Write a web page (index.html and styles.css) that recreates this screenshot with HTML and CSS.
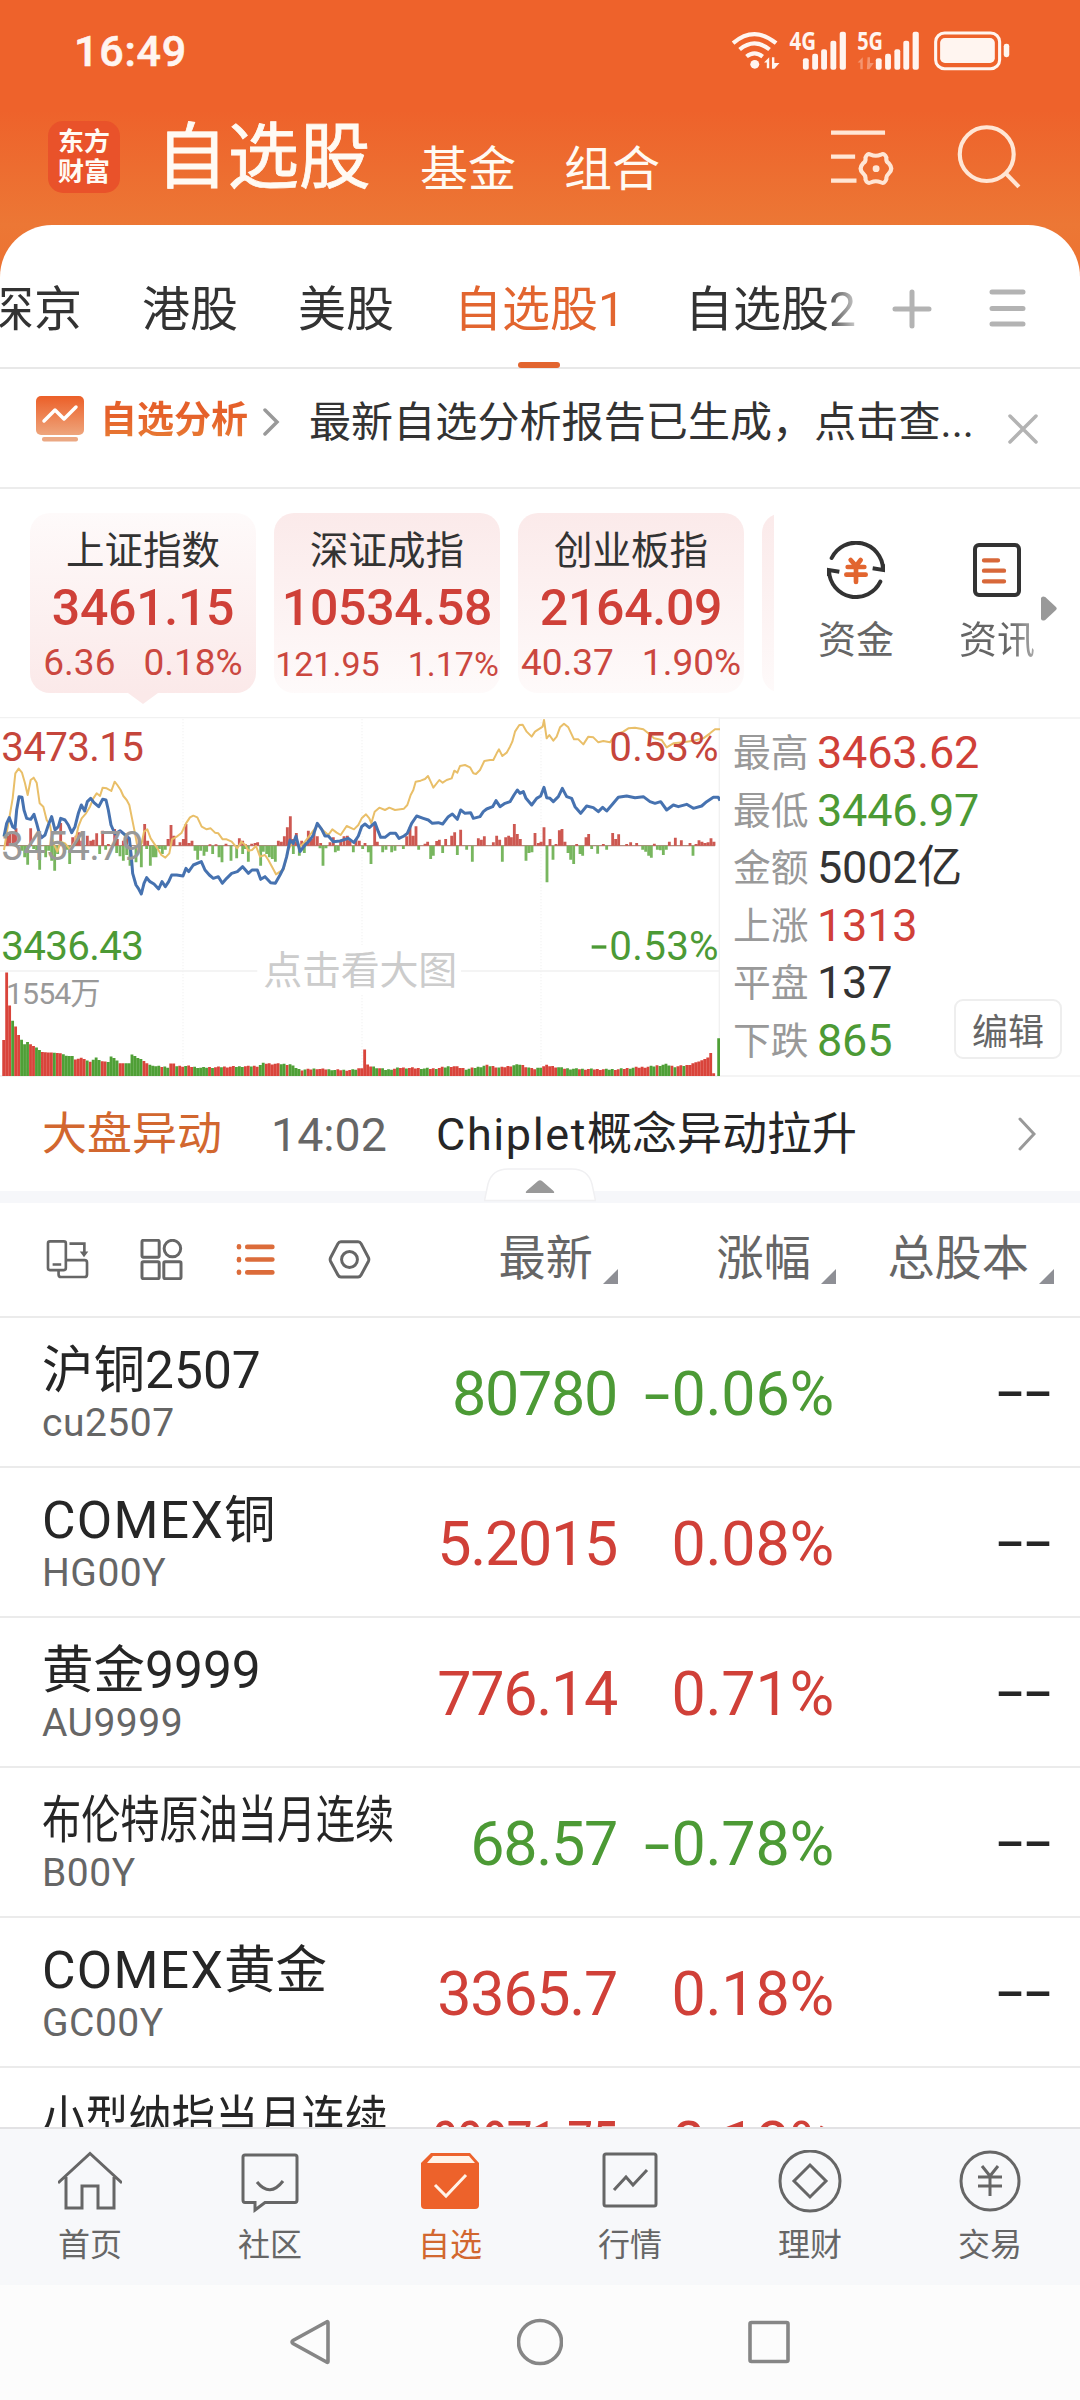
FILE: index.html
```html
<!DOCTYPE html>
<html lang="zh-CN">
<head>
<meta charset="utf-8">
<title>自选股</title>
<link rel="stylesheet" href="styles.css">
</head>
<body>
<div class="phone">
  <header class="top">
    <div class="status">
      <span class="clock">16:49</span>
      <svg class="status-icons" viewBox="550 90 820 122" preserveAspectRatio="none" fill="#fff5f0">
        <g fill="none" stroke="#fff5f0" stroke-width="12">
          <path d="M559 129Q621 76 684 129"/><path d="M578 148Q621 112 665 148"/><path d="M598 169Q621 150 645 169"/>
          <rect x="1148" y="99" width="186" height="106" rx="26" stroke-width="9"/>
        </g>
        <circle cx="622" cy="192" r="13"/>
        <path d="M649 187l15-16v33h-7v-17zM672 171h7v17h15l-15 17h-7z"/>
        <path opacity=".35" d="M921 187l15-16v36h-7v-20zM950 171h7v17h11l-13 19h-7z"/>
        <rect x="762" y="174" width="17" height="34" rx="6"/><rect x="789" y="161" width="17" height="47" rx="6"/><rect x="815" y="147" width="17" height="61" rx="6"/><rect x="842" y="122" width="17" height="86" rx="6"/><rect x="869" y="95" width="18" height="113" rx="6"/>
        <rect x="974" y="174" width="17" height="34" rx="6"/><rect x="1001" y="161" width="17" height="47" rx="6"/><rect x="1028" y="147" width="17" height="61" rx="6"/><rect x="1054" y="122" width="17" height="86" rx="6"/><rect x="1081" y="95" width="18" height="113" rx="6"/>
        <rect x="1161" y="114" width="159" height="74" rx="14"/><rect x="1346" y="131" width="16" height="40" rx="7"/>
        <text class="net" x="723" y="151" textLength="77" lengthAdjust="spacingAndGlyphs">4G</text>
        <text class="net" x="920" y="151" textLength="75" lengthAdjust="spacingAndGlyphs">5G</text>
      </svg>
    </div>
    <div class="titlebar">
      <div class="logo"><span>东方</span><span>财富</span></div>
      <h1 class="title">自选股</h1>
      <span class="section">基金</span>
      <span class="section">组合</span>
      <svg class="ic-manage" viewBox="842 385 186 174" preserveAspectRatio="none" fill="none" stroke="#ffe6d5" stroke-width="13">
        <path d="M845 399h157M845 471h70M845 543h74"/>
        <path stroke-linejoin="round" stroke-width="12" d="M960 465Q975 472 990 465Q1001 459 1006 474Q1004 486 1013 491Q1027 507 1013 521Q1004 530 1006 538Q1001 554 989 548Q975 541 962 548Q950 554 945 539Q947 529 938 521Q924 507 938 491Q947 486 945 474Q950 459 960 465Z"/>
        <circle cx="976" cy="507" r="10" fill="#ffe6d5" stroke="none"/>
      </svg>
      <svg class="ic-search" viewBox="1212 372 188 194" preserveAspectRatio="none" fill="none" stroke="#ffe6d5" stroke-width="12"><ellipse cx="1298" cy="462" rx="78" ry="80"/><path d="M1351 517l40 43"/></svg>
    </div>
  </header>

  <main class="sheet">
    <nav class="tabs">
      <div class="tablist">
        <span>深京</span><span>港股</span><span>美股</span><span class="on">自选股1</span><span>自选股2</span>
      </div>
      <svg class="tab-tools" viewBox="0 0 140 48" stroke="#b3b3b3" stroke-width="5" stroke-linecap="round"><path d="M3 24h34M20 7v34M100 7h31M100 23.500h31M100 39h31"/></svg>
    </nav>

    <section class="banner">
      <svg class="ic-report" viewBox="0 0 48 46"><defs><linearGradient id="rg" x2="0" y2="1"><stop stop-color="#ec5f28"/><stop offset="1" stop-color="#eea57c"/></linearGradient></defs><rect width="48" height="39" rx="5" fill="url(#rg)"/><path d="M8 25l11-11 9 9 12-12" fill="none" stroke="#fff" stroke-width="3.500" stroke-linecap="round" stroke-linejoin="round"/><rect x="6" y="41" width="36" height="4.500" rx="2" fill="#eba883"/></svg>
      <b class="report-label">自选分析</b>
      <svg class="ic-more" viewBox="0 0 18 28" fill="none" stroke="#999" stroke-width="3.500" stroke-linecap="round"><path d="M3 2l12 12L3 26"/></svg>
      <span class="report-text">最新自选分析报告已生成，点击查...</span>
      <svg class="ic-close" viewBox="0 0 30 30" stroke="#b3b3b3" stroke-width="3.500" stroke-linecap="round"><path d="M2 2l26 26M28 2L2 28"/></svg>
    </section>

    <section class="indices">
      <div class="cards">
        <div class="card active"><span class="iname">上证指数</span><b>3461.15</b><p><span>6.36</span><span>0.18%</span></p></div>
        <div class="card"><span class="iname">深证成指</span><b>10534.58</b><p class="tight"><span>121.95</span><span>1.17%</span></p></div>
        <div class="card"><span class="iname">创业板指</span><b>2164.09</b><p><span>40.37</span><span>1.90%</span></p></div>
        <div class="card"></div>
      </div>
      <div class="shortcut">
        <svg class="ic-fund" viewBox="0 0 174 174" fill="none" stroke="#333" stroke-width="12"><path stroke-linecap="round" d="M14 51A81 81 0 0 1 168 84"/><path stroke-linecap="round" d="M160 122A81 81 0 0 1 6 90"/><path d="M137 82l31 5V70M37 92L6 87v18"/><path stroke="#e2652f" stroke-linecap="round" stroke-width="14" d="M71 57l16 18M101 57L87 75M62 78h50M58 101h58M87 75v48"/></svg>
        <span>资金</span>
      </div>
      <div class="shortcut faded">
        <svg class="ic-news" viewBox="0 0 144 162" fill="none" stroke-width="12" stroke="#333"><rect x="6" y="6" width="132" height="150" rx="12"/><path stroke="#d8683a" stroke-width="13" stroke-linecap="round" d="M33 52h42M33 83h60M33 115h60"/></svg>
        <span>资讯</span>
      </div>
      <svg class="ic-next" viewBox="0 0 15 24" preserveAspectRatio="none"><path d="M0 2Q1-.5 4 1L14 10.500Q15.500 12 14 13.500L4 23Q1 24.500 0 22Z" fill="#999"/></svg>
    </section>

    <section class="market">
      <svg class="chart" viewBox="0 21 2160 1080">
        <g stroke="#f1f1f1" stroke-width="4" fill="none">
          <path d="M0 23H2160M2158 23V1098M0 783H772M1383 783H2160M0 1098H2160"/>
          <path stroke-width="3" stroke-dasharray="4 5" d="M549 27V1098M1086 27V705M1086 855V1098M1623 27V1098"/>
        </g>
        <path id="volUp" stroke="#d9443b" stroke-width="8.500"/>
        <path id="volDown" stroke="#4f9f36" stroke-width="8.500"/>
        <path d="M0 407H2145" stroke="#b08a7c" stroke-width="4"/>
        <path id="flowUp" stroke="#cd5851" stroke-width="8.500"/>
        <path id="flowDown" stroke="#78b65f" stroke-width="8.500"/>
        <polyline fill="none" stroke="#e9bf69" stroke-width="6" stroke-linejoin="round" points="12,420 20,370 38,265 46,190 56,176 66,188 75,220 83,255 92,210 101,203 110,218 119,280 130,290 140,330 150,345 160,400 172,425 182,395 195,400 210,418 225,395 235,350 245,325 258,310 270,290 280,265 290,250 300,258 308,233 320,235 334,243 344,215 352,225 362,240 370,258 380,270 388,285 396,325 405,370 414,420 425,400 432,365 442,358 452,385 462,400 472,415 484,435 496,443 508,430 516,388 530,380 545,368 558,340 570,322 580,317 592,322 605,350 620,358 632,355 645,368 655,370 668,388 680,388 695,395 712,415 724,395 736,405 745,422 756,420 768,408 780,440 795,435 805,450 816,470 828,493 840,485 850,480 865,420 875,400 888,390 900,410 915,395 930,375 945,355 955,345 968,360 985,375 997,358 1010,368 1022,375 1040,348 1062,358 1075,345 1085,325 1098,313 1108,325 1114,340 1124,305 1138,293 1155,300 1168,293 1185,300 1212,296 1222,285 1232,255 1240,240 1247,215 1262,212 1275,207 1284,198 1292,215 1300,233 1318,210 1328,218 1340,210 1355,205 1363,182 1372,188 1380,168 1395,165 1410,172 1420,190 1428,192 1440,180 1453,153 1470,150 1480,150 1490,130 1497,118 1507,138 1520,128 1530,110 1537,95 1545,65 1558,45 1568,44 1580,65 1595,80 1605,65 1620,55 1628,50 1632,30 1640,85 1648,75 1660,92 1670,80 1680,52 1692,41 1705,52 1722,88 1735,88 1750,103 1765,80 1780,82 1795,97 1810,93 1830,97 1845,75 1870,65 1885,55 1905,53 1930,58 1945,70 1962,85 1985,90 2000,112 2020,100 2050,97 2080,92 2110,85 2130,70 2145,58 2160,58"/>
        <polyline fill="none" stroke="#4672b0" stroke-width="9" stroke-linejoin="round" points="12,380 20,340 28,323 38,350 45,355 50,300 57,260 66,262 72,300 80,325 92,328 102,313 110,340 118,370 125,383 135,375 145,345 155,320 165,360 175,350 182,325 195,330 205,345 215,368 225,350 235,310 244,285 254,303 262,275 272,265 282,278 296,290 308,268 318,270 325,300 333,345 345,372 360,362 372,372 388,385 394,440 398,490 408,525 415,535 424,552 432,520 440,503 450,515 462,522 476,537 486,515 496,530 506,515 515,495 530,495 549,498 558,475 566,485 580,465 604,455 615,480 628,495 640,505 655,500 667,520 680,505 695,490 712,485 728,470 745,490 756,480 772,480 782,508 795,500 812,518 826,520 840,495 850,475 860,440 870,390 880,400 888,378 900,425 915,405 930,390 940,375 952,340 965,358 975,378 985,378 1000,395 1020,393 1045,385 1062,398 1075,378 1085,350 1095,342 1108,353 1125,338 1135,365 1142,382 1155,382 1170,370 1187,370 1197,385 1212,378 1222,370 1235,340 1250,318 1270,325 1285,330 1297,340 1315,338 1328,342 1345,320 1357,312 1372,328 1382,300 1395,310 1412,308 1420,325 1440,320 1450,305 1460,297 1478,290 1488,272 1500,290 1515,280 1530,275 1542,255 1552,240 1560,250 1570,245 1578,265 1595,285 1610,265 1622,258 1632,232 1640,263 1650,265 1660,275 1675,260 1687,235 1700,260 1715,265 1725,290 1742,310 1760,288 1780,293 1795,305 1808,292 1820,303 1838,282 1855,262 1880,258 1905,263 1930,260 1950,275 1965,280 1982,275 2000,300 2020,285 2035,290 2060,283 2080,295 2105,288 2120,275 2140,262 2155,262 2160,272"/>
        <g class="axis">
          <text class="up" x="4" y="153" textLength="428">3473.15</text>
          <text class="flat" x="4" y="450" textLength="428">3454.79</text>
          <text class="down" x="4" y="750" textLength="428">3436.43</text>
          <text class="up" x="1828" y="153" textLength="328">0.53%</text>
          <text class="down" x="1828" y="750" textLength="328">0.53%</text>
          <path d="M1775 711h44" stroke="#4c9a35" stroke-width="10"/>
        </g>
        <text class="vol" x="18" y="881" textLength="284">1554万</text>
        <text class="hint" x="790" y="822" textLength="582">点击看大图</text>
      </svg>
      <div class="stats">
        <dl>
          <dt>最高</dt><dd class="up">3463.62</dd>
          <dt>最低</dt><dd class="down">3446.97</dd>
          <dt>金额</dt><dd>5002亿</dd>
          <dt>上涨</dt><dd class="up">1313</dd>
          <dt>平盘</dt><dd>137</dd>
          <dt>下跌</dt><dd class="down">865</dd>
        </dl>
        <button class="edit">编辑</button>
      </div>
    </section>

    <section class="news">
      <span class="tag">大盘异动</span><time>14:02</time><span class="headline"><i>Chiplet</i>概念异动拉升</span>
      <svg class="ic-go" viewBox="0 0 18 34" fill="none" stroke="#999" stroke-width="3" stroke-linecap="round"><path d="M2 2l14 15L2 32"/></svg>
    </section>
    <div class="band">
      <svg class="handle" viewBox="0 0 112 34"><path d="M0.500 32.500L4 16Q8 1 24 1H88Q104 1 108 16L111.500 32.500Z" fill="#fff" stroke="#f0f0f2" stroke-width="1.500"/><path d="M42 25Q41 24 43 22.500L54 13Q56 11.500 58 13L69 22.500Q71 24 70 25Z" fill="#999"/></svg>
    </div>

    <section class="colhead">
      <div class="views">
        <svg viewBox="50 238 128 124" fill="none" stroke="#666" stroke-width="8"><rect x="55" y="245" width="54" height="87" rx="6"/><path d="M69 315h26M111 302h55q7 0 7 7v36q0 8-8 8H95q-8 0-8-8V335M120 252h45v28"/><path d="M151 276h26l-13 17z" fill="#666" stroke="none"/></svg>
        <svg viewBox="332 238 128 124" fill="none" stroke="#666" stroke-width="9"><rect x="337" y="242" width="52" height="51" rx="4"/><circle cx="429" cy="267" r="25"/><rect x="337" y="307" width="52" height="51" rx="4"/><rect x="403" y="307" width="52" height="51" rx="4"/></svg>
        <svg viewBox="614 238 128 124" fill="none" stroke="#dc6c3a" stroke-width="14" stroke-linecap="round"><path d="M653 262h76M653 300h76M653 339h76M628 260v3M628 299v3M628 337v3"/></svg>
        <svg viewBox="896 238 128 124" fill="none" stroke="#666" stroke-width="9"><path stroke-linejoin="round" d="M934 246h52q6 0 9 6l22 42q3 6 0 12l-22 41q-3 6-9 6h-52q-6 0-9-6l-22-41q-3-6 0-12l22-42q3-6 9-6z"/><circle cx="960" cy="300" r="24"/></svg>
      </div>
      <span class="col sort c1">最新</span><span class="col sort c2">涨幅</span><span class="col sort c3">总股本</span>
    </section>

    <section class="rows">
      <div class="row"><div class="who"><span>沪铜2507</span><small>cu2507</small></div><div class="num down">80780</div><div class="num down pct"><i class="dash">-</i>0.06%</div><div class="cap"><i class="dash">-</i><i class="dash">-</i></div></div>
      <div class="row"><div class="who"><span><i>COMEX</i>铜</span><small>HG00Y</small></div><div class="num up">5.2015</div><div class="num up pct">0.08%</div><div class="cap"><i class="dash">-</i><i class="dash">-</i></div></div>
      <div class="row"><div class="who"><span>黄金9999</span><small>AU9999</small></div><div class="num up">776.14</div><div class="num up pct">0.71%</div><div class="cap"><i class="dash">-</i><i class="dash">-</i></div></div>
      <div class="row"><div class="who"><span class="fit9">布伦特原油当月连续</span><small>B00Y</small></div><div class="num down">68.57</div><div class="num down pct"><i class="dash">-</i>0.78%</div><div class="cap"><i class="dash">-</i><i class="dash">-</i></div></div>
      <div class="row"><div class="who"><span><i>COMEX</i>黄金</span><small>GC00Y</small></div><div class="num up">3365.7</div><div class="num up pct">0.18%</div><div class="cap"><i class="dash">-</i><i class="dash">-</i></div></div>
      <div class="row"><div class="who"><span class="fit8">小型纳指当月连续</span></div><div class="num up fitnum">22871.75</div><div class="num up pct">0.18%</div></div>
    </section>
  </main>

  <nav class="dock">
    <a><svg viewBox="0 0 64 64"><path d="M0 33L32 3.500 64 33M8 27V58H24V36H40V58H56V27"/></svg>首页</a>
    <a><svg viewBox="0 0 64 64"><path d="M7 5H57Q59 5 59 7V50Q59 52.500 57 52.500H27L17 60V52.500H7Q5 52.500 5 50V7Q5 5 7 5ZM19 32Q32 48 45 31"/></svg>社区</a>
    <a class="on"><svg viewBox="0 0 64 64"><path d="M13 3H52L61 13V55Q61 59 57 59H7Q3 59 3 55V13Z" fill="#ed622b" stroke="none"/><path d="M15 6H51L57 13H9Z" fill="#fff3e8" stroke="none"/><path d="M17 35L28 46 48 25" stroke="#fff3e8"/></svg>自选</a>
    <a><svg viewBox="0 0 64 64"><rect x="6" y="4" width="52" height="52" rx="2"/><path d="M16 40L28 27 35 35 49 20"/></svg>行情</a>
    <a><svg viewBox="0 0 64 64"><circle cx="32" cy="31" r="30"/><path d="M32 15L48 31 32 47 16 31Z"/></svg>理财</a>
    <a><svg viewBox="0 0 64 64"><circle cx="32" cy="31" r="29"/><path d="M24 16L32 26 40 16M20 27H44M20 36H44M32 26V46"/></svg>交易</a>
  </nav>
  <footer class="sysnav">
    <svg viewBox="0 0 46 50"><path d="M40 5.500V44.500Q40 46 38.500 45L5 26.500Q3 25 5 23.500L38.500 5Q40 4 40 5.500Z"/></svg>
    <svg viewBox="0 0 46 50"><circle cx="23" cy="25" r="21.500"/></svg>
    <svg viewBox="0 0 46 50"><rect x="4" y="5.500" width="38" height="39" rx="1.500"/></svg>
  </footer>
</div>
<script src="chart.js"></script>
</body>
</html>
```
FILE: styles.css
```css
* { box-sizing: border-box; }
body { margin: 0; font-family: Roboto, "Noto Sans CJK SC", sans-serif; color: #333; background: #fff; }
i { font-style: normal; }
svg { display: block; flex: none; }
.up { color: #d04038; fill: #c5453b; }
.down { color: #4c9a35; fill: #4c9a35; }
.flat { fill: #999; }

.phone { width: 1080px; height: 2400px; overflow: hidden; display: flex; flex-direction: column; background: linear-gradient(#ee622b 110px, #ec7735 225px, #ed7030 300px); }

.top { height: 225px; flex: none; color: #fffaf3; }
.status { height: 100px; display: flex; align-items: center; padding: 3px 67px 0 75px; justify-content: space-between; }
.clock { font-size: 43px; font-weight: 500; letter-spacing: .8px; line-height: 50px; margin: -1px 0 0 -1px; color: #fff5f0; -webkit-text-stroke: .6px; }
.status-icons { width: 282px; height: 41px; margin-right: 1px; margin-top: -2px; overflow: visible; }
.net { font: 700 72px "Open Sans", Roboto, sans-serif; }
.titlebar { height: 125px; display: flex; align-items: flex-start; padding: 21px 0 0 48px; }
.logo { width: 72px; height: 72px; border-radius: 15px; background: #e9522a; display: flex; flex-direction: column; justify-content: center; align-items: center; font-weight: 700; font-size: 26px; line-height: 30px; }
.title { margin: -3px 0 0 36px; font-size: 71.500px; line-height: 80px; font-weight: 400; width: 214px; white-space: nowrap; -webkit-text-stroke: .8px; }
.section { font-size: 48px; line-height: 60px; margin: 19px 0 0 48px; white-space: nowrap; }
.title + .section { margin-left: 50px; }
.ic-manage { width: 64px; height: 58px; margin: 7px 0 0 170px; }
.ic-search { width: 65px; height: 65px; margin: 3px 0 0 63px; }

.sheet { flex: 1; min-height: 0; background: #fff; border-radius: 52px 52px 0 0; overflow: hidden; display: flex; flex-direction: column; }
.sheet > * { flex: none; }
.tabs { height: 144px; border-bottom: 2px solid #e8e8e8; display: flex; align-items: flex-start; }
.tablist { width: 857px; height: 144px; display: flex; gap: 60px; padding-left: 82px; overflow: hidden; font-size: 48px; line-height: 170px; white-space: nowrap; -webkit-mask: linear-gradient(90deg, #000 825px, rgba(0,0,0,.25) 856px); }
.tablist span:first-child { margin-left: -96px; }
.tablist .on { color: #e2652f; position: relative; }
.tablist .on::after { content: ""; position: absolute; left: 64px; top: 137px; width: 42px; height: 6px; border-radius: 3px; background: #e2652f; }
.tab-tools { width: 140px; height: 48px; margin: 60px 0 0 35px; }

.banner { height: 120px; border-bottom: 2px solid #ececec; display: flex; padding-left: 36px; }
.ic-report { width: 48px; height: 46px; margin-top: 27px; }
.report-label { font-size: 37px; line-height: 50px; margin: 27px 14px 0 16px; background: linear-gradient(#e5602a 20%, #eba041 85%); -webkit-background-clip: text; background-clip: text; color: transparent; width: 148px; }
.ic-more { width: 18px; height: 28px; margin-top: 39px; }
.report-text { font-size: 42px; line-height: 56px; margin: 26px 0 0 29px; width: 699px; white-space: nowrap; letter-spacing: .1px; }
.ic-close { width: 30px; height: 30px; margin-top: 45px; }

.indices { height: 228px; display: flex; padding-left: 30px; }
.cards { width: 744px; height: 200px; margin-top: 24px; display: flex; gap: 18px; overflow: hidden; }
.card { flex: none; width: 226px; height: 180px; border-radius: 20px; background: linear-gradient(#fbeaea, #fefafa); text-align: center; color: #cf4038; white-space: nowrap; position: relative; }
.card.active { background: linear-gradient(#fefafa, #fbe9e9); }
.card.active::after { content: ""; position: absolute; left: 98px; top: 180px; border: solid transparent; border-width: 11px 15px 0; border-top-color: #fbe9e9; }
.iname { display: block; color: #333; font-size: 38.500px; line-height: 44px; margin-top: 16px; }
.card b { display: block; font-size: 50px; font-weight: 500; line-height: 56px; margin-top: 7px; letter-spacing: -.3px; }
.card p { margin: 6px 0 0; display: flex; justify-content: center; gap: 28px; font-size: 37px; line-height: 42px; color: #cb473f; }
.card p.tight { font-size: 34px; gap: 28px; }
.card p.tight span { position: relative; top: 1px; }
.shortcut { width: 142px; padding-top: 53px; display: flex; flex-direction: column; align-items: center; color: #666; font-size: 38px; line-height: 44px; margin-left: 11px; height: 200px; }
.shortcut svg { margin-bottom: 19px; }
.shortcut + .shortcut { margin-left: -1px; }
.faded span { background: linear-gradient(90deg, #666 50px, #aaa 76px); -webkit-background-clip: text; background-clip: text; color: transparent; }
.ic-fund { width: 58px; height: 58px; margin-top: -1px; }
.ic-news { width: 48px; height: 54px; margin-top: 1px; }
.shortcut .ic-news { margin-bottom: 21px; }
.ic-next { width: 16px; height: 25px; margin: 107px 0 0 -27px; }

.market { height: 360px; display: flex; border-bottom: 2px solid #f4f4f4; }
.chart { width: 720px; height: 360px; }
.axis text { font-size: 121px; }
.vol { font-size: 91px; fill: #999; }
.hint { font-size: 117px; fill: #ccc; }
.stats { flex: 1; display: grid; border-top: 2px solid #f4f4f4; }
.stats > * { grid-area: 1 / 1; }
dl { margin: 5px 0 0 13px; display: grid; grid-template-columns: 84px 1fr; grid-auto-rows: 57.500px; line-height: 57.300px; height: 345px; }
dt { font-size: 37.800px; color: #999; position: relative; top: 1px; }
dd { margin: 0; font-size: 45px; letter-spacing: -.2px; }
.edit { align-self: end; justify-self: end; width: 108px; height: 60px; margin: 0 18px 16px 0; border: 2px solid #eee; border-radius: 9px; background: #fff; padding: 0; font: 36px Roboto, "Noto Sans CJK SC", sans-serif; color: #666; }

.news { height: 114px; display: flex; align-items: flex-start; padding: 28px 44px 0 42px; font-size: 45px; line-height: 60px; color: #262626; white-space: nowrap; }
.tag { color: #d2672f; width: 229px; }
time { color: #666; width: 165px; font-size: 46.500px; }
.headline { flex: 1; }
.headline i { letter-spacing: 1.600px; }
.ic-go { width: 18px; height: 34px; margin-top: 12px; }
.band { height: 12px; background: #f6f7fa; position: relative; }
.handle { position: absolute; left: 484px; top: -23px; width: 112px; height: 34px; }

.colhead { height: 115px; border-bottom: 2px solid #ebebeb; display: flex; padding-left: 46px; }
.views { display: flex; gap: 51px; padding-top: 36px; width: 412px; }
.views svg { width: 43px; height: 41px; }
.col { font-size: 47.200px; line-height: 113px; color: #666; text-align: right; white-space: nowrap; }
.sort::after { content: ""; display: inline-block; margin-left: 10px; border: solid transparent; border-color: transparent transparent #8e8f95 transparent; border-width: 0 0 15px 15px; vertical-align: -9px; }
.c1 { width: 160px; } .c2 { width: 218px; } .c3 { width: 218px; }

.row { height: 150px; display: grid; grid-template-columns: 360px 215px 217px 218px; padding-left: 42px; border-bottom: 2px solid #ebebeb; white-space: nowrap; }
.who { color: #262626; padding-top: 22px; }
.who > span { display: block; width: max-content; font-size: 51.500px; line-height: 62px; transform-origin: 0 50%; }
.who i { letter-spacing: 1.300px; }
.who small { display: block; font-size: 39px; line-height: 42px; color: #666; letter-spacing: .5px; }
.fit9 { transform: scaleX(.76); }
.fit8 { transform: scaleX(.84); }
.num { font-size: 61px; line-height: 152px; text-align: right; letter-spacing: -1.300px; }
.num.pct { letter-spacing: -.2px; }
.fitnum { transform: scaleX(.75); transform-origin: 100% 50%; justify-self: end; }
.dash { display: inline-block; transform: scaleX(1.550); width: 28px; text-align: center; }
.cap { font-size: 61px; line-height: 146px; text-align: right; color: #262626; }

.dock { height: 158px; flex: none; background: #f7f8fa; border-top: 2px solid #e2e2e4; display: grid; grid-template-columns: repeat(6, 180px); }
.dock a { display: flex; flex-direction: column; align-items: center; padding-top: 21px; font-size: 32px; line-height: 40px; color: #666; }
.dock svg { width: 64px; height: 64px; margin-bottom: 11px; fill: none; stroke: #666; stroke-width: 3; }
.dock a.on { color: #d2672f; }
.sysnav { height: 115px; flex: none; background: #fcfcfc; display: flex; justify-content: center; align-items: center; gap: 183px; padding-bottom: 1px; }
.sysnav svg { width: 46px; height: 50px; fill: none; stroke: #868686; stroke-width: 3.600; }
```
FILE: chart.js
```js
// Capital-flow bars around the zero line: alternating x, length.
const flowUp = [22,30,30,38,40,36,48,52,92,52,182,68,218,25,228,30,236,40,245,15,262,30,272,15,280,18,290,37,308,45,325,5,344,50,352,20,370,15,380,25,434,65,443,15,504,20,513,62,522,30,540,10,550,20,558,65,567,8,576,15,630,4,648,4,678,6,718,22,728,15,736,5,755,6,765,8,773,10,835,15,844,12,853,28,862,55,871,88,880,20,889,38,905,15,915,10,925,45,934,20,942,40,952,28,962,8,990,10,1000,25,1022,15,1032,28,1042,30,1050,15,1068,20,1078,15,1095,8,1124,65,1132,12,1220,28,1230,55,1239,30,1248,58,1275,6,1283,12,1310,14,1318,18,1337,20,1355,30,1364,40,1382,48,1435,22,1444,18,1453,28,1480,10,1490,30,1499,18,1517,25,1526,30,1534,25,1543,65,1552,35,1561,20,1605,38,1615,8,1623,12,1632,55,1650,20,1668,5,1678,46,1686,50,1695,12,1730,5,1758,25,1766,35,1810,5,1838,38,1847,20,1856,34,1880,5,1892,10,1910,8,1963,6,2008,12,2026,24,2044,16,2070,8,2088,5,2097,16,2106,12,2115,8,2124,10,2133,22,2142,12];
const flowDown = [65,15,74,35,83,57,101,10,110,20,119,72,137,35,146,15,155,45,164,75,173,25,200,12,209,55,299,25,317,12,350,22,360,32,370,45,380,28,390,60,408,50,424,65,440,10,451,60,460,35,468,35,478,10,487,25,496,12,585,15,593,42,602,15,612,30,620,18,638,25,657,35,666,50,693,45,710,38,728,25,736,10,745,48,782,60,790,18,800,25,808,35,817,40,826,48,880,25,898,30,913,22,960,8,969,60,978,8,1006,20,1015,15,1060,20,1088,10,1105,20,1113,55,1148,20,1158,12,1175,20,1185,15,1210,10,1256,12,1292,40,1300,30,1328,22,1372,28,1400,12,1417,48,1507,48,1578,45,1587,22,1596,20,1641,110,1659,42,1704,22,1712,42,1721,55,1740,25,1748,30,1775,10,1793,24,1820,12,1928,12,1937,18,1946,30,1954,36,1972,12,1981,14,1990,28,1999,12,2079,30];

// Turnover profile: x, height.
const turnover = [[11,108],[20,312],[29,210],[38,165],[47,148],[56,122],[65,108],[74,95],[83,102],[92,95],[110,85],[125,72],[160,70],[185,68],[200,60],[220,60],[222,48],[245,55],[270,42],[290,57],[300,45],[325,42],[334,60],[345,52],[360,38],[388,38],[397,68],[410,55],[425,50],[445,35],[460,30],[505,27],[514,40],[530,30],[560,30],[600,25],[700,28],[780,30],[782,38],[870,35],[900,18],[950,22],[1010,18],[1060,18],[1085,25],[1094,80],[1103,32],[1160,18],[1200,25],[1300,22],[1360,30],[1400,20],[1460,32],[1500,25],[1560,35],[1600,20],[1640,32],[1700,22],[1800,20],[1850,20],[1900,25],[1950,28],[2000,35],[2020,28],[2060,32],[2100,45],[2123,55],[2133,70],[2141,8],[2160,8]];
const opening = "RRRGRRGGGRRGGRRRRGRRGGGGRRRRGRGGGRRGGGGRRGGGGGGRRGGGGRGGRRGRRGRRGG";
const pattern = "GGGRGRRGRRRRGGGRRGRRGGRRRRRGGRG";

function heightAt(x) {
  let i = 1;
  while (i < turnover.length - 1 && turnover[i][0] < x) i++;
  const [x0, h0] = turnover[i - 1], [x1, h1] = turnover[i];
  return h0 + (h1 - h0) * Math.min(1, (x - x0) / (x1 - x0));
}
function bars(list, base, dir) {
  let d = "";
  for (let i = 0; i < list.length; i += 2) d += `M${list[i]} ${base}v${dir * list[i + 1]}`;
  return d;
}
const up = [], down = [];
for (let i = 0; i < 239; i++) {
  const x = 11 + i * 8.95;
  const c = i > 228 ? "R" : i < opening.length ? opening[i] : pattern[(i - opening.length) % pattern.length];
  const wobble = i > 50 && i < 232 ? (i * 7) % 5 - 2 : 0;
  (c === "R" ? up : down).push(x, heightAt(x) + wobble);
}
down.push(2156, 113);
const set = (id, d) => document.getElementById(id).setAttribute("d", d);
set("volUp", bars(up, 1098, -1));
set("volDown", bars(down, 1098, -1));
set("flowUp", bars(flowUp, 407, -1));
set("flowDown", bars(flowDown, 407, 1));
```
